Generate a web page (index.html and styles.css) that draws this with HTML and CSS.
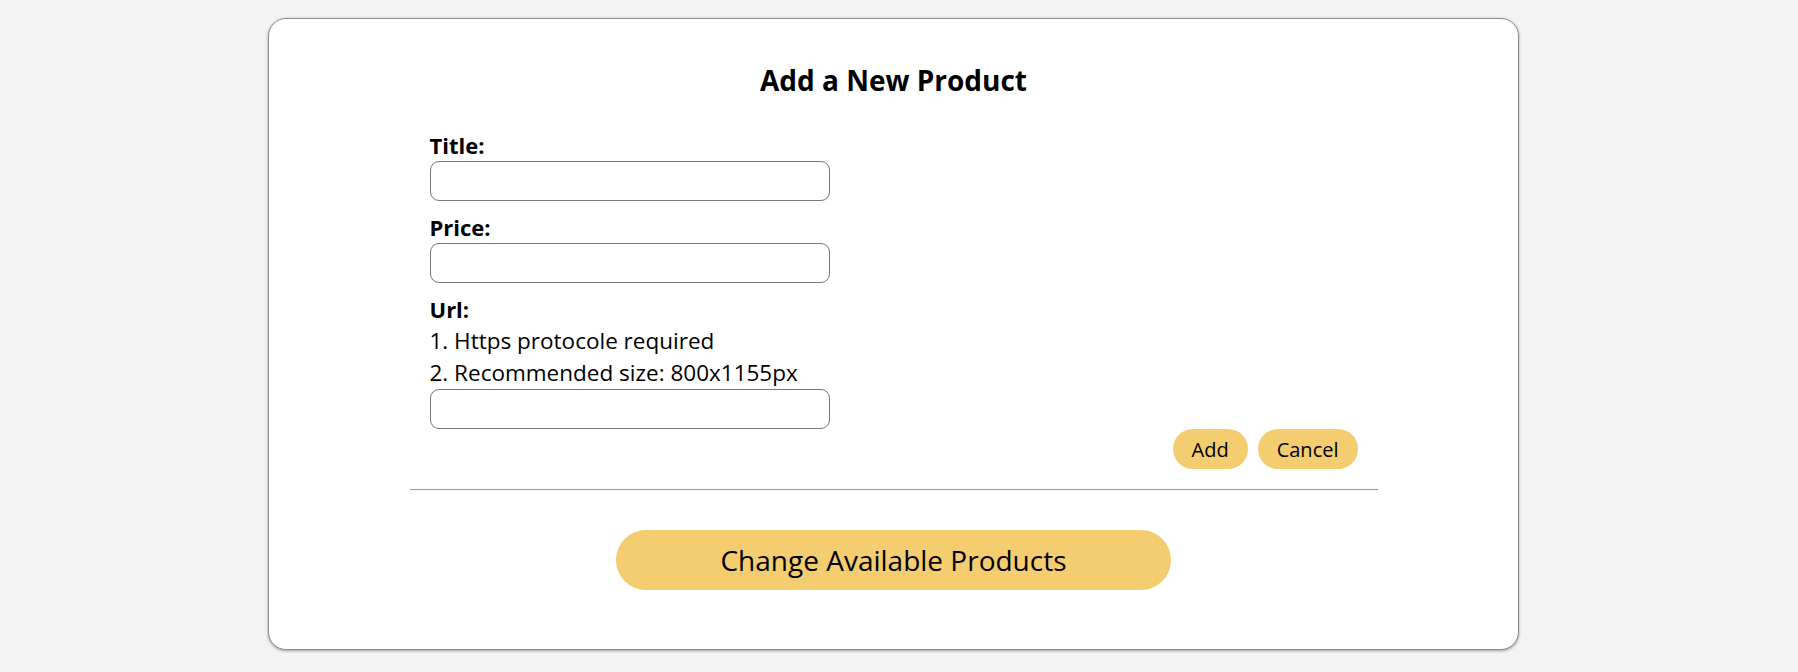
FILE: index.html
```html
<!DOCTYPE html>
<html lang="en">
<head>
<meta charset="utf-8">
<title>Add a New Product</title>
<link rel="stylesheet" href="styles.css">
</head>
<body>
<main class="card">
  <h2 class="card-title">Add a New Product</h2>
  <section class="add-form">
    <div class="fields">
      <label class="field-label" for="title">Title:</label>
      <input class="field-input" id="title" type="text">
      <label class="field-label" for="price">Price:</label>
      <input class="field-input" id="price" type="text">
      <label class="field-label" for="url">Url:</label>
      <p class="hint">1. Https protocole required</p>
      <p class="hint">2. Recommended size: 800x1155px</p>
      <input class="field-input" id="url" type="text">
    </div>
    <div class="actions">
      <button class="pill-btn" type="button">Add</button>
      <button class="pill-btn" type="button">Cancel</button>
    </div>
  </section>
  <hr class="divider">
  <div class="bottom">
    <button class="big-btn" type="button">Change Available Products</button>
  </div>
</main>
</body>
</html>
```

FILE: styles.css
```css
html, body {
  margin: 0;
  padding: 0;
}
body {
  background: #f3f3f3;
  font-family: "Open Sans", "Noto Sans", sans-serif;
  color: #000;
  height: 672px;
  overflow: hidden;
}
.card {
  box-sizing: border-box;
  width: 1251px;
  height: 632px;
  margin: 18px 0 0 268px;
  background: #fff;
  border: 1px solid #8c8c8c;
  border-radius: 18px;
  box-shadow: 0 1px 3px rgba(0, 0, 0, 0.35);
  display: flex;
  flex-direction: column;
}
.card-title {
  margin: 42px 0 0;
  text-align: center;
  font-size: 28px;
  font-weight: 700;
  line-height: 38px;
}
.add-form {
  box-sizing: border-box;
  width: 968px;
  margin: 30px auto 0;
  padding: 0 20px;
}
.fields {
  display: flex;
  flex-direction: column;
  width: 400px;
}
.field-label {
  display: block;
  font-size: 22px;
  font-weight: 700;
  line-height: 32px;
}
.field-input {
  box-sizing: border-box;
  width: 400px;
  height: 40px;
  margin: 0 0 10px;
  border: 1px solid #767676;
  border-radius: 9px;
  background: #fff;
  font: inherit;
  padding: 0 10px;
}
.field-input:last-child {
  margin-bottom: 0;
}
.hint {
  margin: 0;
  font-size: 22.5px;
  line-height: 32px;
}
.actions {
  display: flex;
  justify-content: flex-end;
  gap: 10px;
}
.pill-btn {
  height: 40px;
  padding: 0 19px;
  border: none;
  border-radius: 20px;
  background: #f3cd70;
  color: #000;
  font-family: inherit;
  font-size: 20px;
}
.divider {
  width: 968px;
  margin: 20px auto 0;
  border: none;
  border-top: 1px solid #999;
  height: 0;
}
.bottom {
  display: flex;
  justify-content: center;
  margin-top: 40px;
}
.big-btn {
  width: 555px;
  height: 60px;
  border: none;
  border-radius: 30px;
  background: #f3cd70;
  color: #000;
  font-family: inherit;
  font-size: 28px;
}
```
